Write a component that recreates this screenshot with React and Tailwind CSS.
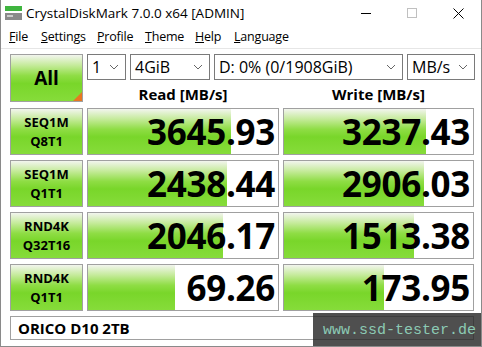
import React from "react";

const rows = [
  { l1: "SEQ1M", l2: "Q8T1", read: "3645.93", rf: 75, write: "3237.43", wf: 75 },
  { l1: "SEQ1M", l2: "Q1T1", read: "2438.44", rf: 73, write: "2906.03", wf: 74 },
  { l1: "RND4K", l2: "Q32T16", read: "2046.17", rf: 71, write: "1513.38", wf: 69 },
  { l1: "RND4K", l2: "Q1T1", read: "69.26", rf: 46, write: "173.95", wf: 53 },
];

const menu = [
  { k: "F", rest: "ile", w: "w-[32px]" },
  { k: "S", rest: "ettings", w: "w-[56px]" },
  { k: "P", rest: "rofile", w: "w-[48px]" },
  { k: "T", rest: "heme", w: "w-[50px]" },
  { k: "H", rest: "elp", w: "w-[39px]" },
  { k: "L", rest: "anguage", w: "w-[60px]" },
];

const green =
  "bg-[linear-gradient(to_bottom,#f2f5ee_0%,#c6eb9c_22%,#8fdd45_45%,#79d62a_62%,#86dc3a_100%)]";

const Select = ({ w, children }) => (
  <div
    className={`${w} h-[26px] border border-[#7a7a7a] bg-white flex items-center justify-between pl-[4px] pr-[6px] text-[16px] text-black`}
  >
    <span>{children}</span>
    <svg width="10" height="6" viewBox="0 0 10 6">
      <path d="M1 1 L5 5 L9 1" fill="none" stroke="#666" strokeWidth="1" />
    </svg>
  </div>
);

const Bar = ({ value, fill }) => (
  <div className="relative h-full border border-[#a0a0a0] bg-white overflow-hidden">
    <div className={`absolute left-0 top-0 bottom-0 ${green}`} style={{ width: fill + "%" }} />
    <div className="relative h-full flex items-center justify-end pr-[3px] text-[35px] font-bold leading-none text-black tracking-[-0.3px]">
      {value}
    </div>
  </div>
);

export default function App() {
  return (
    <div
      className="w-[482px] h-[347px] bg-white border-l border-r border-b border-[#8a8a8a] relative overflow-hidden"
      style={{ fontFamily: '"Open Sans", "Noto Sans", sans-serif' }}
    >
      {/* title bar */}
      <div className="h-[26px] flex items-center text-[13.5px] text-black">
        <svg width="18" height="16" viewBox="0 0 18 16" className="ml-[4px] mr-[3px]">
          <rect x="0" y="1" width="17" height="5" fill="#3fb53f" />
          <rect x="0" y="8" width="17" height="7" fill="#8a8a8a" />
          <rect x="2" y="10" width="6" height="2" fill="#ccc" />
        </svg>
        <span>CrystalDiskMark 7.0.0 x64 [ADMIN]</span>
        <div className="ml-auto flex items-center">
          <div className="w-[46px] flex justify-center">
            <div className="w-[10px] h-px bg-black" />
          </div>
          <div className="w-[46px] flex justify-center">
            <div className="w-[10px] h-[10px] border border-[#c0c0c0]" />
          </div>
          <div className="w-[46px] flex justify-center">
            <svg width="11" height="11" viewBox="0 0 11 11">
              <path d="M0.5 0.5 L10.5 10.5 M10.5 0.5 L0.5 10.5" stroke="#000" strokeWidth="1" />
            </svg>
          </div>
        </div>
      </div>
      {/* menu */}
      <div className="h-[23px] flex items-center pl-[8px] text-[12.5px] tracking-[-0.2px] text-black border-b border-[#e6e6e6]">
        {menu.map((m) => (
          <span key={m.k} className={m.w}>
            <u>{m.k}</u>
            {m.rest}
          </span>
        ))}
      </div>

      <div className="pl-[9px] pt-[5px]">
        {/* header */}
        <div className="flex gap-[4px]">
          <div
            className={`relative w-[73px] h-[48px] border border-[#a0a0a0] ${green} flex items-center justify-center text-[19px] font-bold text-black`}
          >
            All
            <div className="absolute right-0 bottom-0 w-0 h-0 border-l-[9px] border-l-transparent border-b-[9px] border-b-[#e87722]" />
          </div>
          <div className="flex flex-col">
            <div className="flex gap-[4px]">
              <Select w="w-[39px]">1</Select>
              <Select w="w-[80px]">4GiB</Select>
              <Select w="w-[189px]">D: 0% (0/1908GiB)</Select>
              <Select w="w-[68px]">MB/s</Select>
            </div>
            <div className="flex gap-[4px] mt-[5px]">
              <div className="w-[192px] text-center text-[15px] font-bold leading-[18px] text-black">Read [MB/s]</div>
              <div className="w-[191px] text-center text-[15px] font-bold leading-[18px] text-black">Write [MB/s]</div>
            </div>
          </div>
        </div>

        {/* rows */}
        <div className="flex flex-col gap-[5px] mt-[5px]">
          {rows.map((r, i) => (
            <div key={i} className="flex gap-[4px] h-[47px]">
              <div
                className={`w-[73px] h-full border border-[#a0a0a0] ${green} flex flex-col items-center justify-center text-[13px] font-bold leading-[19px] text-black`}
              >
                <span>{r.l1}</span>
                <span>{r.l2}</span>
              </div>
              <div className="w-[192px] h-full">
                <Bar value={r.read} fill={r.rf} />
              </div>
              <div className="w-[191px] h-full">
                <Bar value={r.write} fill={r.wf} />
              </div>
            </div>
          ))}
        </div>

        {/* name */}
        <div className="mt-[5px] w-[464px] h-[24px] border border-[#a0a0a0] flex items-center pl-[7px] text-[15px] font-bold text-black">
          ORICO D10 2TB
        </div>
      </div>

      {/* watermark */}
      <div className="absolute left-[312px] top-[313px] w-[170px] h-[34px] bg-[rgba(40,40,40,0.82)] flex items-center pl-[10px]">
        <span
          className="text-[15px] text-[#8ccab4] leading-none"
          style={{ fontFamily: '"Liberation Mono", monospace' }}
        >
          www.ssd-tester.de
        </span>
      </div>
    </div>
  );
}
